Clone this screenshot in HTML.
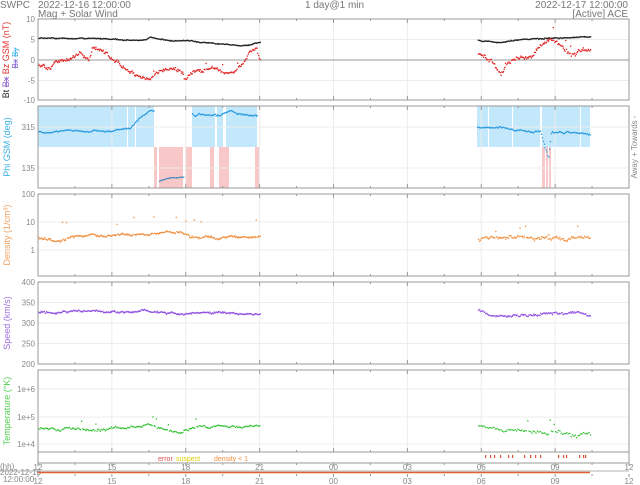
<!DOCTYPE html>
<html><head><meta charset="utf-8">
<style>
html,body{margin:0;padding:0;background:#fff;width:640px;height:485px;overflow:hidden}
svg{display:block;font-family:"Liberation Sans","DejaVu Sans",sans-serif}
</style></head><body>
<svg id="s" width="640" height="485" viewBox="0 0 640 485" xmlns="http://www.w3.org/2000/svg">
<g fill="#777" font-size="10">
<text x="0" y="8">SWPC</text>
<text x="38" y="8">2022-12-16 12:00:00</text>
<text x="38" y="17">Mag + Solar Wind</text>
<text x="305" y="8">1 day@1 min</text>
<text x="628" y="8" text-anchor="end">2022-12-17 12:00:00</text>
<text x="628" y="17" text-anchor="end">[Active] ACE</text>
</g>
<g id="bg"></g>
<g id="grid" stroke="#ececec" stroke-width="1"></g>
<g id="data"></g>
<g id="axes" fill="none" stroke="#999" stroke-width="1"></g>
<g id="lab" fill="#888" font-size="8"></g>
<g font-size="9">
<text transform="translate(9,60) rotate(-90)" text-anchor="middle"><tspan fill="#222">Bt </tspan><tspan fill="#8a5cd0" text-decoration="line-through">Bx</tspan><tspan fill="#e03030"> Bz GSM (nT)</tspan></text>
<text transform="translate(18,58) rotate(-90)" text-anchor="middle" fill="#7f5fd0" font-size="8"><tspan text-decoration="line-through">Bx</tspan> <tspan fill="#3ab0e8" text-decoration="line-through">By</tspan></text>
<text transform="translate(10,147) rotate(-90)" text-anchor="middle" fill="#3ab0e8">Phi GSM (deg)</text>
<text transform="translate(10,235) rotate(-90)" text-anchor="middle" fill="#f0a060">Density (1/cm³)</text>
<text transform="translate(10,323) rotate(-90)" text-anchor="middle" fill="#a070e0">Speed (km/s)</text>
<text transform="translate(10,411) rotate(-90)" text-anchor="middle" fill="#50d050">Temperature (°K)</text>
<text transform="translate(637,147) rotate(-90)" text-anchor="middle" fill="#888" font-size="8">Away +   Towards -</text>
</g>
<g font-size="7">
<text x="158" y="461" fill="#e05050">error</text><text x="176" y="461" fill="#e0d000">suspect</text>
<text x="214" y="461" fill="#f09040">density &lt; 1</text>
</g>
<g fill="#888" font-size="8">
<text x="0" y="469">(hh)</text>
<text x="0" y="475">2022-12-16</text>
<text x="3" y="482">12:00:00</text>
</g>
<line x1="38" y1="472.5" x2="590" y2="472.5" stroke="#e06030" stroke-width="1.5"/>
<line x1="0" y1="471" x2="629" y2="471" stroke="#999" stroke-width="0.7"/>
</svg>
<script>
var NS="http://www.w3.org/2000/svg";
function el(p,t,a,txt){var e=document.createElementNS(NS,t);for(var k in a)e.setAttribute(k,a[k]);if(txt!=null)e.textContent=txt;document.getElementById(p).appendChild(e);return e;}
var seed=7;function rnd(){seed=(seed*16807)%2147483647;return seed/2147483647;}
function gr(){return (rnd()+rnd()+rnd()-1.5)/1.5;}
var X0=38,X1=629;
var panels=[[19,100],[106,188],[194,276],[282,364],[370,452]];
var xt=[],xl=["12","15","18","21","00","03","06","09","12"];
for(var i=0;i<=8;i++)xt.push(X0+i*(X1-X0)/8);
function rect(x1,x2,y1,y2,c){el("bg","rect",{x:x1,y:y1,width:x2-x1,height:y2-y1,fill:c});}
var blue="#c4e8fb",pink="#f8c8c8";
[[38,154],[192,257],[477,590]].forEach(function(r){rect(r[0],r[1],106,147,blue);});
[[154,157],[159,183],[185,192],[210,214],[219,229],[255,259],[542,545],[546,548],[549,551]].forEach(function(r){rect(r[0],r[1],147,188,pink);});
[[127,128],[135,136],[215,217],[223,226],[488,489],[512,513],[540,542],[580,581]].forEach(function(r){rect(r[0],r[1],106,147,"#fff");});
panels.forEach(function(p){for(var i=1;i<8;i++)el("grid","line",{x1:xt[i],x2:xt[i],y1:p[0],y2:p[1]});});
function hg(y){el("grid","line",{x1:X0,x2:X1,y1:y,y2:y});}
[39.5,80.5].forEach(hg);el("grid","line",{x1:X0,x2:X1,y1:60,y2:60,stroke:"#999"});
[127,168,222,250,302.5,323,343.5,389,417,444].forEach(hg);
panels.forEach(function(p){el("axes","rect",{x:X0,y:p[0],width:X1-X0,height:p[1]-p[0]});
 for(var i=0;i<=16;i++){var x=X0+i*(X1-X0)/16,l=i%2?2:4;el("axes","line",{x1:x,x2:x,y1:p[0],y2:p[0]+l});el("axes","line",{x1:x,x2:x,y1:p[1],y2:p[1]-l});}});
el("axes","rect",{x:X0,y:452,width:X1-X0,height:11});
for(var i=0;i<=16;i++){var x=X0+i*(X1-X0)/16;el("axes","line",{x1:x,x2:x,y1:463,y2:i%2?465:466});el("axes","line",{x1:x,x2:x,y1:474,y2:i%2?476:477});}
function yl(y,t){el("lab","text",{x:35,y:y+3,"text-anchor":"end"},t);}
yl(19,"10");yl(39.5,"5");yl(60,"0");yl(80.5,"-5");yl(100,"-10");
yl(127,"315");yl(168,"135");yl(194,"100");yl(222,"10");yl(250,"1");
yl(282,"400");yl(302.5,"350");yl(323,"300");yl(343.5,"250");yl(364,"200");
yl(389,"1e+6");yl(417,"1e+5");yl(444,"1e+4");
xl.forEach(function(t,i){el("lab","text",{x:xt[i],y:470,"text-anchor":"middle"},t);el("lab","text",{x:xt[i],y:484,"text-anchor":"middle"},t);});
function interp(k,x){for(var i=0;i<k.length-1;i++){if(x>=k[i][0]&&x<=k[i+1][0]){var f=(x-k[i][0])/(k[i+1][0]-k[i][0]);return k[i][1]+f*(k[i+1][1]-k[i][1]);}}return k[k.length-1][1];}
function pts(k,x0,x1,fy,col,noise,step,rw,out){var w=0;for(var x=x0;x<=x1;x+=step){w=w*0.93+gr()*rw;var v=interp(k,x)+w+gr()*noise;if(out&&rnd()<0.03)v+=out*(0.5+rnd());var y=fy(v);el("data","rect",{x:x+gr()*0.4,y:y,width:1.3,height:1.3,fill:col});}}
var bY=function(v){return 60-v*4.05;};
pts([[38,5.5],[100,5.3],[145,5],[150,5.7],[160,5.2],[200,4.5],[250,3.8],[260,4.6]],38,260,bY,"#222",0.12,0.8,0.12);
pts([[478,5],[500,4.6],[520,5.3],[560,5.5],[590,5.8]],478,590,bY,"#222",0.15,0.8,0.12);
pts([[38,-1],[50,-2],[60,0],[70,1],[80,2],[88,0],[92,3],[110,0],[130,-3],[150,-5],[160,-3.5],[180,-2.5],[185,-4],[190,-3],[210,-2],[230,-3],[240,-1],[250,2.5],[256,3],[260,-1]],38,260,bY,"#e02020",0.5,0.8,0.45,2);
pts([[478,2],[490,0],[500,-3],[505,-1],[515,0],[530,1],[540,4],[548,5],[560,3],[570,1],[580,2],[590,2.5]],478,590,bY,"#e02020",0.6,0.8,0.5,2);
var pY=function(v){return 188.5-(v-45)*82/360;};
pts([[38,298],[80,300],[110,297],[130,308],[140,360],[150,390],[154,392]],38,154,pY,"#2a9be0",3,0.9,4);
pts([[159,80],[170,95],[183,98]],159,183,pY,"#4a8ac0",2,1,2);
pts([[192,372],[220,365],[230,385],[235,368],[257,366]],192,257,pY,"#2a9be0",4,0.9,5);
pts([[477,318],[500,312],[520,305],[540,300],[543,250],[548,180],[551,290],[570,300],[590,295]],477,590,pY,"#2a9be0",3,0.9,5);
var dY=function(v){return 250-28*Math.log10(Math.max(v,0.2));};
pts([[38,3],[80,3],[120,3.5],[180,4.5],[190,3],[260,3.2]],38,260,dY,"#f09040",0.3,0.8,0.35,8);
pts([[478,2.5],[590,2.6]],478,590,dY,"#f09040",0.4,0.9,0.5,3);
var sY=function(v){return 282+(400-v)*82/200;};
pts([[38,326],[200,328],[260,327]],38,260,sY,"#9050e0",2.5,0.8,2.5);
pts([[478,335],[490,322],[590,322]],478,590,sY,"#9050e0",3,0.9,4);
var tY=function(v){return 417-27.5*Math.log10(Math.max(v,5000)/1e5);};
pts([[38,4e4],[120,4e4],[150,5e4],[180,3e4],[200,6e4],[260,4.5e4]],38,260,tY,"#30c030",4000,1.1,5000,4e4);
pts([[478,5e4],[500,3.5e4],[530,3e4],[590,3e4]],478,590,tY,"#30c030",4000,1.4,5000,4e4);
[[485,1],[490,1],[494,1],[500,1],[508,1],[512,1],[524,1],[530,1],[535,1],[540,1],[558,1],[563,1],[566,1],[579,1],[583,1],[585,1]].forEach(function(p){el("data","rect",{x:p[0],y:455,width:1.2,height:3,fill:"#e05030"});});
</script>
</body></html>
